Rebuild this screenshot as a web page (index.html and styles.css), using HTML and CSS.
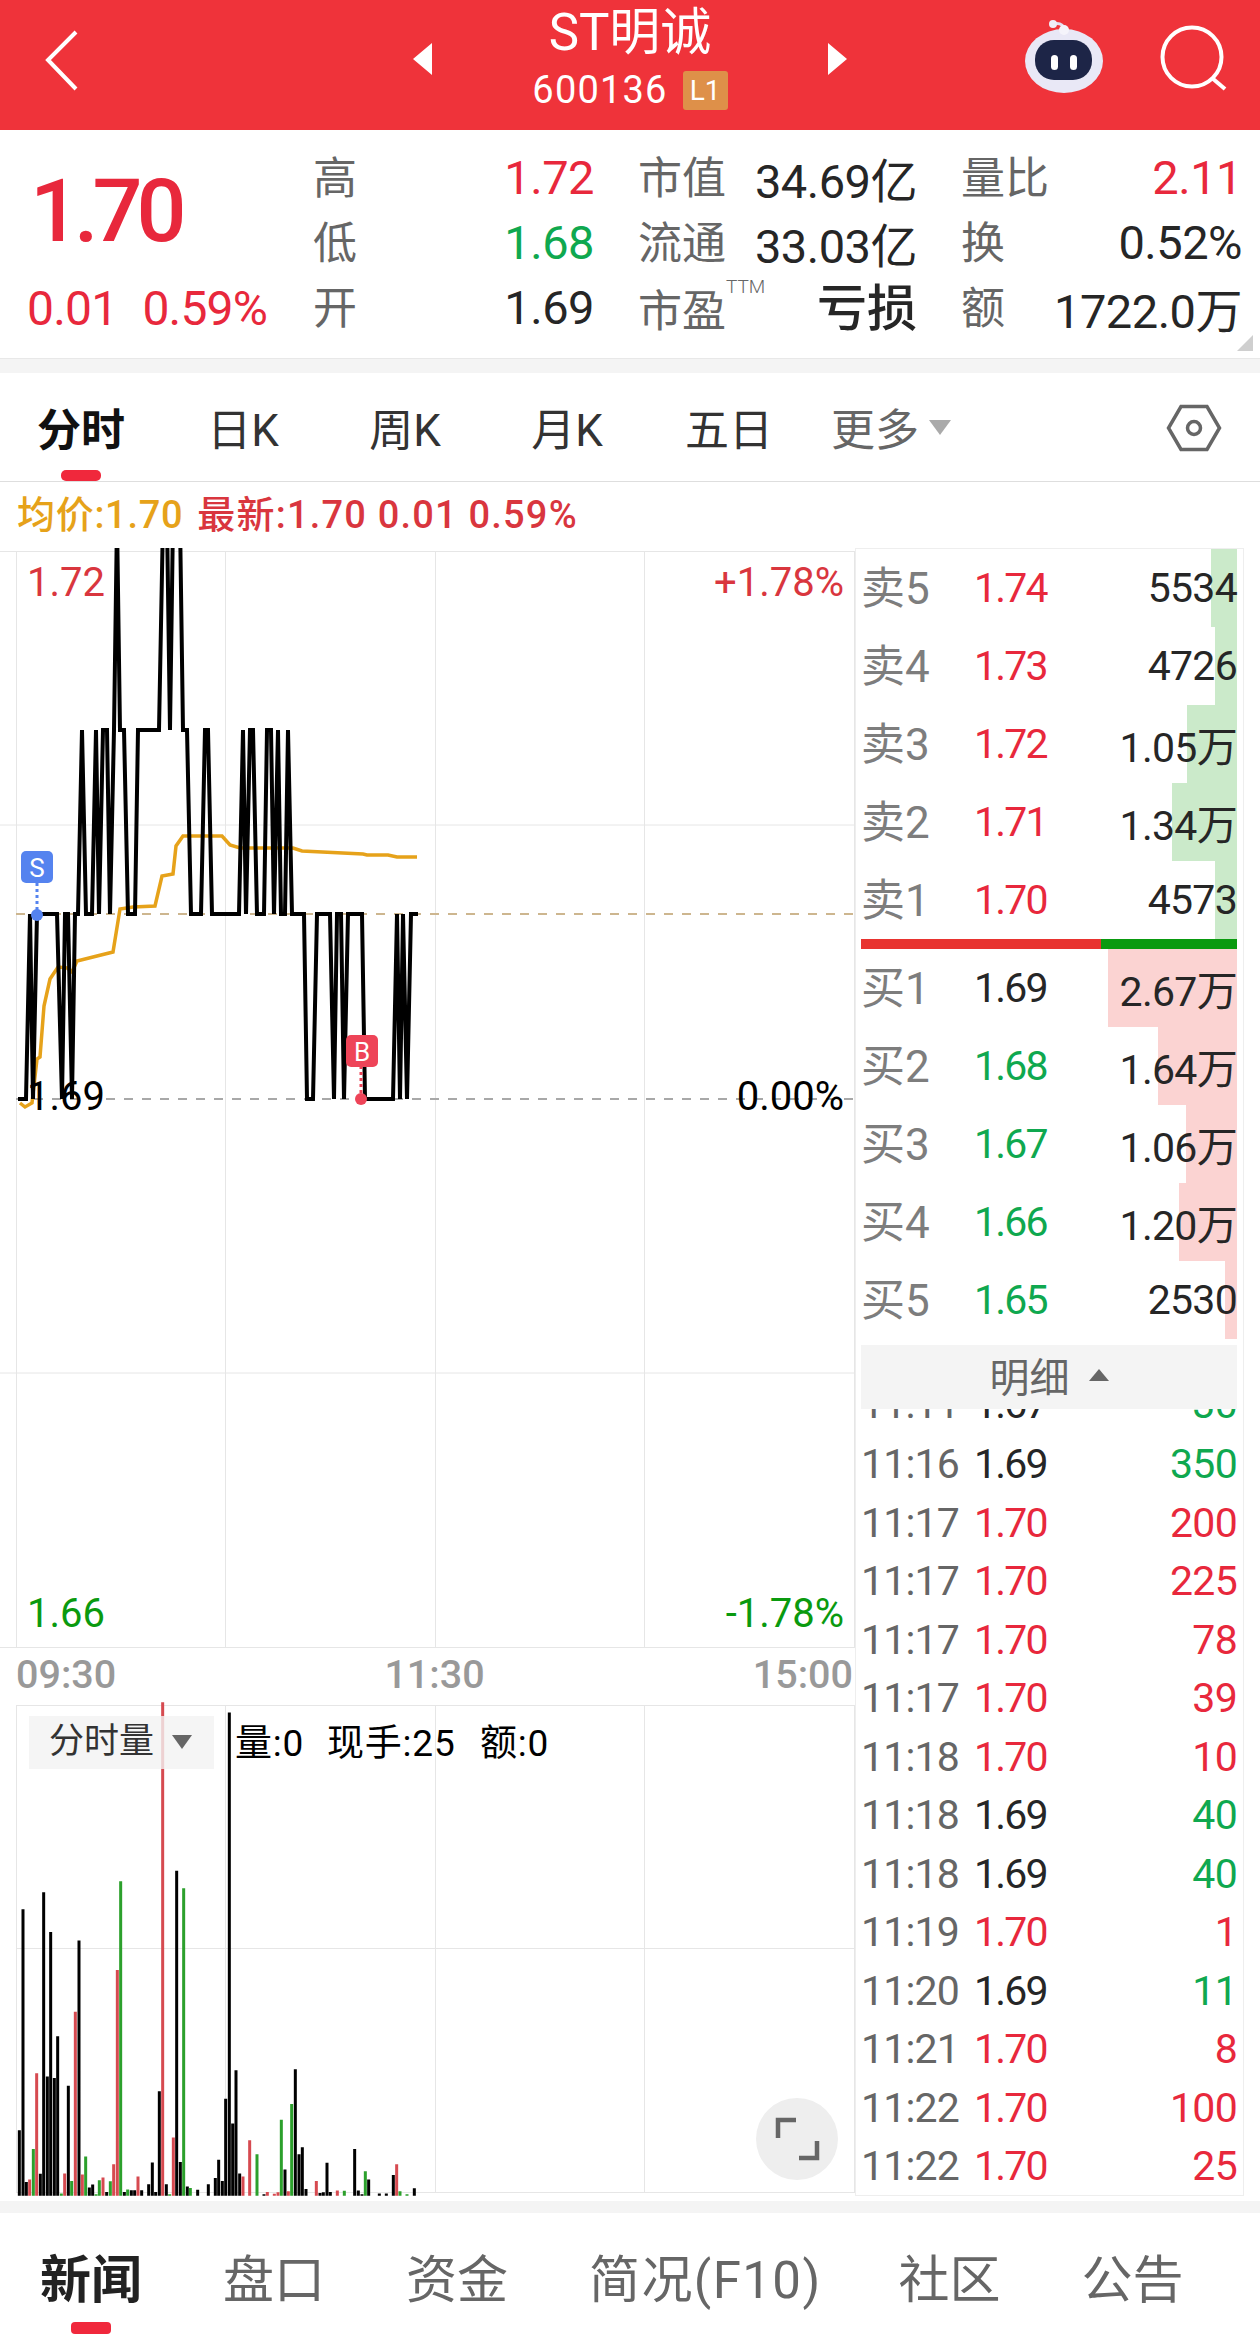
FILE: index.html
```html
<!DOCTYPE html>
<html lang="zh-CN">
<head>
  <meta charset="UTF-8" />
  <meta name="viewport" content="width=device-width, initial-scale=1.0"/>
  <title>ST明诚 600136</title>
  <link rel="stylesheet" href="styles.css">
</head>
<body>
  <header class="topbar">
    <svg class="back" width="46" height="70" viewBox="0 0 46 70"><path d="M32 6 4 34l28 29"/></svg>
    <span class="arrow arrow-left"></span>
    <div class="title">
      <div class="name">ST明诚</div>
      <div class="code">600136<span class="level">L1</span></div>
    </div>
    <span class="arrow arrow-right"></span>
    <div class="top-icons">
      <svg class="robot" width="80" height="74" viewBox="1026 19 80 74">
        <path d="M1054 24c8-2 12 2 12 9" fill="none" stroke="#e4e2f4" stroke-width="3"/>
        <circle cx="1054" cy="24" r="4" fill="#f0eef9"/>
        <ellipse cx="1065" cy="61" rx="39" ry="32" fill="#e9e8f6"/>
        <circle cx="1065" cy="30" r="5" fill="#f5f4fb"/>
        <rect x="1036" y="40" width="57" height="40" rx="19" fill="#1d2547"/>
        <rect x="1052" y="55" width="7" height="15" rx="3.5" fill="#fff"/>
        <rect x="1071" y="55" width="7" height="15" rx="3.5" fill="#fff"/>
      </svg>
      <svg class="search" width="68" height="68" viewBox="1160 25 68 68"><circle cx="1193" cy="57" r="29.5"/><path d="m1213 78 13 11"/></svg>
    </div>
  </header>

  <section class="quote">
    <div class="last">
      <div class="last-price">1.70</div>
      <div class="last-change"><span>0.01</span><span>0.59%</span></div>
    </div>
    <div class="stat"><span class="k">高</span><span class="v up">1.72</span></div>
    <div class="stat"><span class="k">市值</span><span class="v">34.69亿</span></div>
    <div class="stat"><span class="k">量比</span><span class="v up">2.11</span></div>
    <div class="stat"><span class="k">低</span><span class="v down">1.68</span></div>
    <div class="stat"><span class="k">流通</span><span class="v">33.03亿</span></div>
    <div class="stat"><span class="k">换</span><span class="v">0.52%</span></div>
    <div class="stat"><span class="k">开</span><span class="v">1.69</span></div>
    <div class="stat"><span class="k k-low">市盈<sup class="ttm">TTM</sup></span><span class="v v-loss">亏损</span></div>
    <div class="stat"><span class="k">额</span><span class="v">1722.0万</span></div>
  </section>
  <div class="band"></div>

  <nav class="tabs">
    <span class="tab active">分时</span>
    <span class="tab">日K</span>
    <span class="tab">周K</span>
    <span class="tab">月K</span>
    <span class="tab">五日</span>
    <span class="tab more">更多<i class="more-caret"></i></span>
    <svg class="hex" width="60" height="52" viewBox="0 0 60 52"><path d="M17 4.500h26L55.500 26 43 47.500H17L4.500 26z"/><circle cx="30" cy="26" r="6.5"/></svg>
  </nav>

  <div class="ticker"><span class="avg">均价:1.70</span><span class="latest">最新:1.70 0.01 0.59%</span></div>

  <main class="board">
    <div class="charts">
      <!-- y coordinates below are page y -->
      <svg class="price-chart" width="855" height="1100" viewBox="0 548 855 1100">
        <defs><clipPath id="plot"><rect x="0" y="547" width="855" height="1100"/></clipPath></defs>
        <path class="grid" d="M0 551.5H855M0 825H855M0 1373H855M0 1647.5H855M16.5 551V1648M225.5 551V1648M435.5 551V1648M644.5 551V1648M854.5 551V1648"/>
        <path class="dash dash-tan" d="M16 914H855"/>
        <path class="dash dash-gray" d="M16 1099H855"/>
        <g clip-path="url(#plot)">
          <polyline class="avg-line" points="20,1103 25,1107 32,1103 37,1059 40,1057 44,1006 50,979 58,967 67,968 72,972 77,961 97,956 113,952 120,909 133,907 155,906 162,876 173,874 176,846 183,836 222,836 230,845 240,848 293,848 302,851 363,854 367,855 388,855 397,857 417,857"/>
          <polyline class="price-line" points="18,1099 26,1099 30,914 33,1099 37,914 57,914 62,1099 65,914 68,914 72,1099 75,914 78,914 82,730 86,914 92,914 96,730 99,914 103,730 107,730 110,914 114,730 117,520 120,730 124,730 128,914 135,914 138,730 159,730 163,520 167,520 170,730 173,520 180,520 183,730 187,730 191,914 201,914 205,730 208,730 212,914 239,914 243,730 246,914 250,730 253,730 257,914 264,914 267,730 271,730 274,914 278,730 281,914 285,914 288,730 292,914 304,914 307,1099 313,1099 317,914 330,914 334,1099 337,914 341,914 344,1099 348,914 362,914 365,1099 393,1099 397,914 400,1099 403,914 407,1099 411,914 418,914"/>
        </g>
        <path class="pin pin-sell" d="M37 883V914"/>
        <circle cx="37" cy="915" r="6" fill="#5583ef"/>
        <rect x="21" y="851" width="32" height="32" rx="5" fill="#5583ef"/>
        <text class="badge" x="37" y="877">S</text>
        <path class="pin pin-buy" d="M361 1066V1099"/>
        <circle cx="361" cy="1099" r="6" fill="#ee4458"/>
        <rect x="346" y="1035" width="32" height="32" rx="5" fill="#ee4458"/>
        <text class="badge" x="362" y="1061">B</text>
        <text class="axis axis-up" x="27" y="596">1.72</text>
        <text class="axis axis-flat" x="27" y="1110">1.69</text>
        <text class="axis axis-down" x="27" y="1627">1.66</text>
        <text class="axis axis-up end" x="844" y="596">+1.78%</text>
        <text class="axis axis-flat end" x="844" y="1110">0.00%</text>
        <text class="axis axis-down end" x="844" y="1627">-1.78%</text>
      </svg>

      <div class="times"><span>09:30</span><span>11:30</span><span>15:00</span></div>

      <svg class="volume-chart" width="855" height="496" viewBox="0 1700 855 496">
        <path class="grid" d="M16 1705.5H855M16 1948.5H855M16 2192.5H855M16.5 1705V2193M225.5 1705V2193M435.5 1705V2193M644.5 1705V2193M854.5 1705V2193"/>
        <g transform="translate(0 1640) scale(.33333 .36996)">
          <path class="bars bars-flat" d="M58 1502V1325M69 1502V728M79 1502V1465M121 1502V1443M131 1502V682M142 1502V1180M152 1502V789M163 1502V1184M173 1502V1071M205 1502V1205M237 1502V812M268 1502V1480M278 1502V1472M320 1502V1492M373 1502V1492M394 1502V1487M404 1502V1487M425 1502V1487M446 1502V1471M457 1502V1412M467 1502V1492M478 1502V1220M499 1502V1471M530 1502V624M541 1502V1411M562 1502V1477M593 1502V1486M625 1502V1471M646 1502V1454M656 1502V1405M667 1502V1462M677 1502V1240M688 1502V196M698 1502V1307M708 1502V1163M719 1502V1442M792 1502V1498M855 1502V1431M886 1502V1160M897 1502V1390M907 1502V1371M918 1502V1484M960 1502V1495M970 1502V1493M981 1502V1413M991 1502V1492M1064 1502V1376M1075 1502V1488M1086 1502V1498M1106 1502V1458M1138 1502V1496M1159 1502V1496M1180 1502V1446M1243 1502V1482"/>
          <path class="bars bars-up" d="M89 1502V1458M110 1502V1171M194 1502V1442M226 1502V1005M247 1502V1445M309 1502V1453M341 1502V1417M352 1502V892M414 1502V1450M488 1502V168M520 1502V1345M729 1502V1450M749 1502V1352M802 1502V1492M823 1502V1497M834 1502V1493M865 1502V1490M949 1502V1462M1012 1502V1488M1190 1502V1417"/>
          <path class="bars bars-down" d="M100 1502V1376M184 1502V1496M215 1502V1462M257 1502V1396M288 1502V1498M298 1502V1460M331 1502V1463M362 1502V652M383 1502V1485M509 1502V1498M551 1502V671M571 1502V1481M771 1502V1390M844 1502V1297M875 1502V1254M1033 1502V1489M1096 1502V1436M1200 1502V1490M1221 1502V1498"/>
        </g>
        <rect class="vol-tag" x="29" y="1716" width="185" height="53"/>
        <text class="vol-tag-text" x="49" y="1753">分时量</text>
        <path d="M172 1735h20l-10 14z" fill="#666"/>
        <text class="vol-text" x="235" y="1756">量:0</text>
        <text class="vol-text" x="327" y="1756">现手:25</text>
        <text class="vol-text" x="480" y="1756">额:0</text>
        <circle cx="797" cy="2139" r="41" fill="#eeeeee"/>
        <path class="expand" d="M778 2138v-18h18M817 2141v17h-18"/>
      </svg>
    </div>

    <aside class="book">
      <div class="level-row"><i class="depth depth-sell" style="width:26px"></i><span class="lv">卖5</span><span class="px up">1.74</span><span class="qty">5534</span></div>
      <div class="level-row"><i class="depth depth-sell" style="width:22px"></i><span class="lv">卖4</span><span class="px up">1.73</span><span class="qty">4726</span></div>
      <div class="level-row"><i class="depth depth-sell" style="width:50px"></i><span class="lv">卖3</span><span class="px up">1.72</span><span class="qty">1.05万</span></div>
      <div class="level-row"><i class="depth depth-sell" style="width:65px"></i><span class="lv">卖2</span><span class="px up">1.71</span><span class="qty">1.34万</span></div>
      <div class="level-row"><i class="depth depth-sell" style="width:22px"></i><span class="lv">卖1</span><span class="px up">1.70</span><span class="qty">4573</span></div>
      <div class="ratio"><i class="ratio-buy"></i><i class="ratio-sell"></i></div>
      <div class="level-row"><i class="depth depth-buy" style="width:129px"></i><span class="lv">买1</span><span class="px">1.69</span><span class="qty">2.67万</span></div>
      <div class="level-row"><i class="depth depth-buy" style="width:79px"></i><span class="lv">买2</span><span class="px down">1.68</span><span class="qty">1.64万</span></div>
      <div class="level-row"><i class="depth depth-buy" style="width:51px"></i><span class="lv">买3</span><span class="px down">1.67</span><span class="qty">1.06万</span></div>
      <div class="level-row"><i class="depth depth-buy" style="width:58px"></i><span class="lv">买4</span><span class="px down">1.66</span><span class="qty">1.20万</span></div>
      <div class="level-row"><i class="depth depth-buy" style="width:12px"></i><span class="lv">买5</span><span class="px down">1.65</span><span class="qty">2530</span></div>
      <div class="detail-head">明细<i class="detail-caret"></i></div>
      <div class="trades">
        <div class="trade trade-cut"><span class="time">11:11</span><span class="px">1.67</span><span class="qty down">30</span></div>
        <div class="trade"><span class="time">11:16</span><span class="px">1.69</span><span class="qty down">350</span></div>
        <div class="trade"><span class="time">11:17</span><span class="px up">1.70</span><span class="qty up">200</span></div>
        <div class="trade"><span class="time">11:17</span><span class="px up">1.70</span><span class="qty up">225</span></div>
        <div class="trade"><span class="time">11:17</span><span class="px up">1.70</span><span class="qty up">78</span></div>
        <div class="trade"><span class="time">11:17</span><span class="px up">1.70</span><span class="qty up">39</span></div>
        <div class="trade"><span class="time">11:18</span><span class="px up">1.70</span><span class="qty up">10</span></div>
        <div class="trade"><span class="time">11:18</span><span class="px">1.69</span><span class="qty down">40</span></div>
        <div class="trade"><span class="time">11:18</span><span class="px">1.69</span><span class="qty down">40</span></div>
        <div class="trade"><span class="time">11:19</span><span class="px up">1.70</span><span class="qty up">1</span></div>
        <div class="trade"><span class="time">11:20</span><span class="px">1.69</span><span class="qty down">11</span></div>
        <div class="trade"><span class="time">11:21</span><span class="px up">1.70</span><span class="qty up">8</span></div>
        <div class="trade"><span class="time">11:22</span><span class="px up">1.70</span><span class="qty up">100</span></div>
        <div class="trade"><span class="time">11:22</span><span class="px up">1.70</span><span class="qty up">25</span></div>
      </div>
    </aside>
  </main>

  <div class="band band-low"></div>
  <footer class="news-tabs">
    <span class="news-tab active">新闻</span>
    <span class="news-tab">盘口</span>
    <span class="news-tab">资金</span>
    <span class="news-tab news-f10">简况(F10)</span>
    <span class="news-tab">社区</span>
    <span class="news-tab">公告</span>
  </footer>
</body>
</html>
```
FILE: styles.css
```css
* {
  box-sizing: border-box;
}

html, body {
  margin: 0;
  padding: 0;
}

body {
  width: 1260px;
  height: 2334px;
  overflow: hidden;
  background: #fff;
  color: #262626;
  font-family: Roboto, "Noto Sans CJK SC", sans-serif;
}

i {
  display: block;
}

svg {
  display: block;
}

.up { color: #e8283c; }
.down { color: #0fa84f; }

/* top bar */
.topbar {
  height: 130px;
  background: #ef333a;
  color: #fff;
  display: grid;
  grid-template-columns: 44px 369px 19px 396px 19px 1fr;
  align-items: center;
}

.back {
  grid-column: 1 / 3;
  margin: -8px 0 0 44px;
}

.back path {
  fill: none;
  stroke: #fff;
  stroke-width: 4;
}

.arrow {
  width: 0;
  height: 0;
  margin-bottom: 13px;
  border-top: 16px solid transparent;
  border-bottom: 16px solid transparent;
}

.arrow-left {
  border-right: 19px solid #fff;
}

.arrow-right {
  border-left: 19px solid #fff;
}

.title {
  text-align: center;
  align-self: start;
}

.name {
  font-size: 51px;
  line-height: 62px;
  margin-top: 2px;
}

.code {
  display: flex;
  justify-content: center;
  align-items: center;
  margin-top: 3px;
  font-size: 38px;
  line-height: 46px;
  letter-spacing: 1.2px;
}

.level {
  width: 45px;
  height: 39px;
  line-height: 39px;
  margin-left: 15px;
  background: #de9049;
  border-radius: 3px;
  font-size: 28px;
  letter-spacing: 0;
}

.top-icons {
  align-self: start;
  display: flex;
  align-items: flex-start;
  padding: 19px 0 0 178px;
  gap: 54px;
}

.search {
  margin-top: 6px;
  fill: none;
  stroke: #fff;
  stroke-width: 4;
}

/* quote block */
.quote {
  position: relative;
  height: 228px;
  padding: 15px 0 0 27px;
  display: grid;
  grid-template-columns: 242px 281px 279px 281px;
  grid-auto-rows: 65px;
  column-gap: 44px;
}

.quote::after {
  content: "";
  position: absolute;
  right: 7px;
  bottom: 7px;
  width: 16px;
  height: 16px;
  background: #cfcfcf;
  clip-path: polygon(100% 0, 100% 100%, 0 100%);
}

.last {
  grid-row: 1 / 4;
  color: #e8283c;
}

.last-price {
  font-size: 88px;
  font-weight: 500;
  line-height: 132px;
  letter-spacing: -6px;
  margin-left: 3px;
}

.last-change {
  display: flex;
  gap: 25px;
  font-size: 48px;
  line-height: 63px;
  letter-spacing: -.8px;
}

.stat {
  display: flex;
  justify-content: space-between;
  align-items: center;
}

.k {
  color: #666;
  font-size: 44px;
  margin-bottom: 6px;
}

.k-low {
  position: relative;
  margin-bottom: 0;
}

.ttm {
  position: absolute;
  left: 88px;
  top: 1px;
  font-size: 19px;
  line-height: 19px;
  font-weight: 300;
  vertical-align: baseline;
}

.v {
  font-size: 47px;
  letter-spacing: -.5px;
}

.v-loss {
  margin-bottom: 8px;
  font-size: 50px;
  font-weight: 500;
  letter-spacing: 0;
}

.band {
  height: 15px;
  background: #f4f4f4;
  border-top: 1px solid #e8e8e8;
}

.band-low {
  height: 12px;
  margin-top: 5px;
  border-top: 0;
}

/* chart tabs */
.tabs {
  height: 109px;
  display: flex;
  align-items: center;
  border-bottom: 1px solid #dedede;
}

.tab {
  position: relative;
  width: 162px;
  text-align: center;
  font-size: 44px;
  color: #333;
}

.tab.active {
  font-weight: 700;
  color: #111;
}

.tab.active::after {
  content: "";
  position: absolute;
  left: 61px;
  top: 75px;
  width: 40px;
  height: 11px;
  border-radius: 5px;
  background: #f0283c;
}

.tab.more {
  color: #666;
  display: flex;
  justify-content: center;
  align-items: center;
  gap: 10px;
}

.more-caret {
  width: 0;
  height: 0;
  border-left: 11px solid transparent;
  border-right: 11px solid transparent;
  border-top: 15px solid #aaa;
}

.hex {
  margin-left: auto;
  margin-right: 36px;
  margin-top: 2px;
  fill: none;
  stroke: #666;
  stroke-width: 3.5;
}

.ticker {
  height: 66px;
  padding-left: 17px;
  display: flex;
  align-items: center;
  gap: 14px;
  font-size: 38px;
  font-weight: 500;
  line-height: 66px;
}

.avg {
  color: #e6a21a;
  letter-spacing: .7px;
}

.latest {
  color: #d9363e;
  letter-spacing: 1.2px;
}

/* charts */
.board {
  display: flex;
  height: 1648px;
}

.charts {
  width: 855px;
}

.grid {
  fill: none;
  stroke: #e6e6e6;
  stroke-width: 1;
}

.dash {
  fill: none;
  stroke-width: 2;
  stroke-dasharray: 9 9;
}

.dash-tan {
  stroke: #cdb68f;
}

.dash-gray {
  stroke: #a8a8a8;
}

.price-line {
  fill: none;
  stroke: #000;
  stroke-width: 4;
  stroke-linejoin: miter;
}

.avg-line {
  fill: none;
  stroke: #e6a21a;
  stroke-width: 3.5;
}

.pin {
  fill: none;
  stroke-width: 3;
  stroke-dasharray: 3 3;
}

.pin-sell {
  stroke: #5583ef;
}

.pin-buy {
  stroke: #ee4458;
}

.badge {
  fill: #fff;
  font-size: 26px;
  text-anchor: middle;
}

.axis {
  font-size: 40px;
}

.axis.end {
  text-anchor: end;
}

.axis-up { fill: #d9363e; }
.axis-flat { fill: #000; }
.axis-down { fill: #0a9a0f; }

.times {
  height: 52px;
  padding: 0 2px 0 16px;
  display: flex;
  justify-content: space-between;
  align-items: center;
  color: #999;
  font-size: 39.5px;
  font-weight: 500;
}

.bars {
  fill: none;
  stroke-width: 3;
  vector-effect: non-scaling-stroke;
}

.bars-flat { stroke: #000; }
.bars-up { stroke: #d64a50; }
.bars-down { stroke: #2ca02c; }

.vol-tag {
  fill: #f2f2f2;
  fill-opacity: .8;
}

.vol-tag-text {
  fill: #333;
  font-size: 35px;
}

.vol-text {
  fill: #000;
  font-size: 37px;
  letter-spacing: .8px;
}

.expand {
  fill: none;
  stroke: #666;
  stroke-width: 4.5;
}

/* order book */
.book {
  width: 389px;
  height: 1648px;
  padding: 0 6px 0 5px;
  border: 1px solid #eeeeee;
  overflow: hidden;
  font-size: 41px;
}

.level-row {
  position: relative;
  height: 78px;
  display: grid;
  grid-template-columns: 113px 1fr auto;
  align-items: center;
}

.level-row span {
  position: relative;
}

.depth {
  position: absolute;
  top: 0;
  right: 0;
  bottom: 0;
}

.depth-sell {
  background: #cbeaca;
}

.depth-buy {
  background: #fbd3d2;
}

.lv {
  color: #7d7d7d;
  font-size: 44px;
  margin-bottom: 6px;
}

.px {
  letter-spacing: -1.8px;
}

.qty {
  text-align: right;
  letter-spacing: -.7px;
}

.ratio {
  display: flex;
  height: 10px;
}

.ratio-buy {
  width: 240px;
  background: #e8332f;
}

.ratio-sell {
  flex: 1;
  background: #0a9a0f;
}

.detail-head {
  height: 64px;
  margin-top: 6px;
  padding-bottom: 4px;
  background: #f4f4f4;
  display: flex;
  justify-content: center;
  align-items: center;
  gap: 19px;
  color: #666;
  font-size: 40px;
}

.detail-caret {
  width: 0;
  height: 0;
  border-left: 10px solid transparent;
  border-right: 10px solid transparent;
  border-bottom: 12px solid #666;
}

.trades {
  height: 785px;
  overflow: hidden;
}

.trade {
  height: 58.5px;
  display: grid;
  grid-template-columns: 113px 1fr auto;
  align-items: center;
}

.trade-cut {
  margin-top: -32.5px;
  padding-bottom: 4px;
}

.time {
  color: #666;
  letter-spacing: -.8px;
}

/* bottom tabs */
.news-tabs {
  height: 121px;
  padding: 5px 0 0 40px;
  display: flex;
  gap: 81px;
}

.news-tab {
  position: relative;
  display: flex;
  align-items: center;
  font-size: 51px;
  color: #666;
}

.news-f10 {
  margin-right: -4px;
  letter-spacing: 1.4px;
}

.news-tab.active {
  font-weight: 700;
  color: #222;
}

.news-tab.active::after {
  content: "";
  position: absolute;
  left: 31px;
  bottom: 0;
  width: 40px;
  height: 12px;
  border-radius: 4px;
  background: #f0283c;
}
```
